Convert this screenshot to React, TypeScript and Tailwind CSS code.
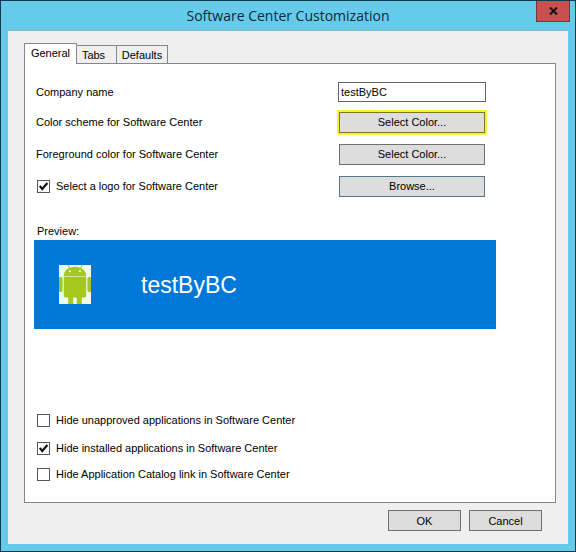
import { useState } from "react";
import type { ReactNode } from "react";

const buttonBase =
  "h-[21px] border bg-[#dddddd] text-center text-[11px] leading-4 text-black";

function Tick() {
  return (
    <svg
      viewBox="0 0 13 13"
      className="pointer-events-none col-start-1 row-start-1 hidden size-[13px] peer-checked:block"
      aria-hidden="true"
    >
      <path d="M2.8 5.8 L5.2 8.9 L10.4 3" fill="none" stroke="#111" strokeWidth="2.2" />
    </svg>
  );
}

function CheckField({ children, checked = false }: { children: ReactNode; checked?: boolean }) {
  return (
    <label className="flex items-center gap-1.5 pl-px">
      <span className="grid">
        <input
          type="checkbox"
          defaultChecked={checked}
          className="peer col-start-1 row-start-1 size-[13px] appearance-none border border-[#555555] bg-white"
        />
        <Tick />
      </span>
      <span>{children}</span>
    </label>
  );
}

function AndroidLogo() {
  return (
    <svg viewBox="0 0 32 39" className="h-[39px] w-8" role="img" aria-label="Company logo">
      <rect width="32" height="39" fill="#f1f8f4" />
      <g fill="#a5c81e">
        <path d="M4.8 11 C5 5.5 9.5 1.8 16 1.8 S27 5.5 27.2 11 Z" />
        <path d="M4.8 12 H27.2 V30.5 Q27.2 32.5 25.2 32.5 H6.8 Q4.8 32.5 4.8 30.5 Z" />
        <rect x="-1" y="12" width="4.6" height="15" rx="1.8" />
        <rect x="28.4" y="12" width="4.6" height="15" rx="1.8" />
        <path d="M9.2 31 H14.2 V39 H9.2 Z M17.8 31 H22.8 V39 H17.8 Z" />
      </g>
      <path d="M8.8 0 L11 4 M23.2 0 L21 4" stroke="#a5c81e" strokeWidth="1" />
      <path d="M4.8 11.5 H27.2" stroke="#d3e495" strokeWidth="1" />
      <circle cx="11" cy="6.3" r="1" fill="#fff" />
      <circle cx="21" cy="6.3" r="1" fill="#fff" />
    </svg>
  );
}

export default function App() {
  const [company, setCompany] = useState("testByBC");

  return (
    <main className="flex min-h-screen flex-col border border-[#12394f] bg-[#66cbea] px-[7px] pb-[7px] font-['Liberation_Sans',Arial,sans-serif] text-[11px] leading-4 text-black">
      <header className="grid h-[29px] grid-cols-[1fr_auto_1fr]">
        <h1 className="col-start-2 self-center font-['Open_Sans','Segoe_UI',sans-serif] text-[14px] leading-5 text-[#0c2a3a]">
          Software Center Customization
        </h1>
        <button
          type="button"
          aria-label="Close"
          className="-mr-0.5 flex h-[21px] w-[34px] items-center justify-center justify-self-end border border-t-0 border-[#6b3a40] bg-[#c75050]"
        >
          <svg viewBox="0 0 9 8" className="h-2 w-[9px]" aria-hidden="true">
            <path d="M1 0.5 L8 7.5 M8 0.5 L1 7.5" stroke="#111" strokeWidth="2" />
          </svg>
        </button>
      </header>

      <section className="flex-1 border-t border-[#8fb4bf] bg-[#efefef] px-4 pt-3">
        <div role="tablist" className="flex items-end">
          <button
            type="button"
            role="tab"
            aria-selected="true"
            className="z-10 -mb-px h-[21px] w-[53px] border border-b-0 border-[#838790] bg-white pb-0.5"
          >
            General
          </button>
          <button
            type="button"
            role="tab"
            aria-selected="false"
            className="h-[18px] w-10 border-t border-r border-[#838790] bg-[#efefef] pr-1.5"
          >
            Tabs
          </button>
          <button
            type="button"
            role="tab"
            aria-selected="false"
            className="h-[18px] w-[51px] border-t border-r border-[#838790] bg-[#efefef]"
          >
            Defaults
          </button>
        </div>

        <div role="tabpanel" className="mr-[-4px] border border-[#838790] bg-white pt-[14px] pr-[59px] pb-4 pl-[9px]">
          <div className="pr-[10px] pl-0.5">
            <div className="flex h-7 items-center justify-between">
              <label htmlFor="company">Company name</label>
              <input
                id="company"
                value={company}
                onChange={(e) => setCompany(e.target.value)}
                className="h-5 w-[148px] border border-[#63656d] bg-white px-0.5"
              />
            </div>
            <div className="flex h-8 items-center justify-between">
              <span>Color scheme for Software Center</span>
              <button
                type="button"
                className={`${buttonBase} mr-px w-[146px] border-[#80761c] outline-2 outline-[#f6f03c]`}
              >
                Select Color...
              </button>
            </div>
            <div className="flex h-8 items-center justify-between">
              <span>Foreground color for Software Center</span>
              <button type="button" className={`${buttonBase} mr-px w-[146px] border-[#707070]`}>
                Select Color...
              </button>
            </div>
            <div className="flex h-8 items-center justify-between">
              <CheckField checked>Select a logo for Software Center</CheckField>
              <button type="button" className={`${buttonBase} mr-px w-[146px] border-[#53788c]`}>
                Browse...
              </button>
            </div>
          </div>

          <h2 className="mt-5 h-[18px] pl-[3px] leading-[18px]">Preview:</h2>
          <div className="flex h-[89px] items-center gap-[50px] bg-[#0078d7] pl-[25px] text-white">
            <AndroidLogo />
            <span className="text-[23px] leading-7">{company}</span>
          </div>

          <div className="mt-[77px] pl-0.5">
            <div className="flex h-7 items-center">
              <CheckField>Hide unapproved applications in Software Center</CheckField>
            </div>
            <div className="flex h-7 items-center">
              <CheckField checked>Hide installed applications in Software Center</CheckField>
            </div>
            <div className="flex h-6 items-center">
              <CheckField>Hide Application Catalog link in Software Center</CheckField>
            </div>
          </div>
        </div>

        <footer className="mt-[7px] mb-3 flex justify-end gap-2 pr-[10px]">
          <button type="button" className={`${buttonBase} w-[73px] border-[#707070]`}>
            OK
          </button>
          <button type="button" className={`${buttonBase} w-[73px] border-[#707070]`}>
            Cancel
          </button>
        </footer>
      </section>
    </main>
  );
}
